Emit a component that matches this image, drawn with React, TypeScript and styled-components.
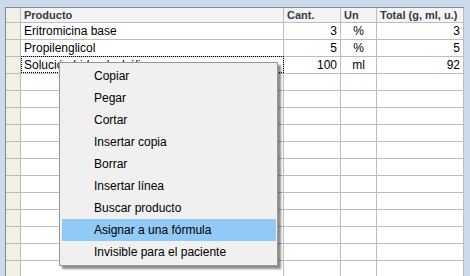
import styled, { createGlobalStyle } from 'styled-components';

interface RowData {
  producto: string;
  cant: string;
  un: string;
  total: string;
  focused?: boolean;
}

const rows: RowData[] = [
  { producto: 'Eritromicina base', cant: '3', un: '%', total: '3' },
  { producto: 'Propilenglicol', cant: '5', un: '%', total: '5' },
  { producto: 'Solución hidroalcohólica', cant: '100', un: 'ml', total: '92', focused: true },
];

const EMPTY_ROWS = 12;

const menuItems = [
  'Copiar',
  'Pegar',
  'Cortar',
  'Insertar copia',
  'Borrar',
  'Insertar línea',
  'Buscar producto',
  'Asignar a una fórmula',
  'Invisible para el paciente',
];

const HOVER_ITEM = 'Asignar a una fórmula';

export default function App() {
  const empty: RowData[] = Array.from({ length: EMPTY_ROWS }, () => ({
    producto: '',
    cant: '',
    un: '',
    total: '',
  }));

  return (
    <>
      <GlobalStyle />
      <Window>
        <GridBox>
          <HeaderRow>
            <RowHead />
            <HeadCell>Producto</HeadCell>
            <HeadCell>Cant.</HeadCell>
            <HeadCell>Un</HeadCell>
            <HeadCell>Total (g, ml, u.)</HeadCell>
          </HeaderRow>
          {[...rows, ...empty].map((r, i) => (
            <DataRow key={i}>
              <RowHead />
              <Cell $focused={r.focused}>{r.producto}</Cell>
              <Cell $align="right">{r.cant}</Cell>
              <Cell $align="center">{r.un}</Cell>
              <Cell $align="right">{r.total}</Cell>
            </DataRow>
          ))}
        </GridBox>
        <ContextMenu>
          {menuItems.map(item => (
            <MenuItem key={item} $active={item === HOVER_ITEM}>
              {item}
            </MenuItem>
          ))}
        </ContextMenu>
      </Window>
    </>
  );
}

const GlobalStyle = createGlobalStyle`
  html, body {
    margin: 0;
    padding: 0;
    width: 470px;
    height: 276px;
    overflow: hidden;
    background: #cbdbeb;
  }
  body {
    font-family: "Liberation Sans", Arial, sans-serif;
  }
`;

const Window = styled.div`
  position: relative;
  width: 470px;
  height: 276px;
  padding: 7px 0 0 5px;
  box-sizing: border-box;
  overflow: hidden;
`;

const GridBox = styled.div`
  width: 459px;
  border-top: 1px solid #8a8a8a;
  border-left: 1px solid #8a8a8a;
  background: #ffffff;
  box-sizing: border-box;
`;

const columns = '15px 263px 57px 36px 87px';

const HeaderRow = styled.div`
  display: grid;
  grid-template-columns: ${columns};
  height: 15px;
`;

const DataRow = styled.div`
  display: grid;
  grid-template-columns: ${columns};
  height: 17px;
`;

const RowHead = styled.div`
  background: #f0f0e7;
  border-right: 1px solid #bdbdbd;
  border-bottom: 1px solid #bdbdbd;
  box-sizing: border-box;
`;

const HeadCell = styled.div`
  background: #f4f4f4;
  border-right: 1px solid #bdbdbd;
  border-bottom: 1px solid #bdbdbd;
  box-sizing: border-box;
  padding-left: 3px;
  font-size: 11px;
  font-weight: bold;
  line-height: 14px;
  color: #3a3a44;
  white-space: nowrap;
  overflow: hidden;
`;

const Cell = styled.div<{ $align?: 'left' | 'right' | 'center'; $focused?: boolean }>`
  position: relative;
  border-right: 1px solid #bdbdbd;
  border-bottom: 1px solid #bdbdbd;
  box-sizing: border-box;
  padding: 0 3px;
  font-size: 12px;
  line-height: 16px;
  color: #000000;
  text-align: ${p => p.$align ?? 'left'};
  white-space: nowrap;
  overflow: visible;

  ${p =>
    p.$focused &&
    `
    &::after {
      content: '';
      position: absolute;
      left: 0;
      top: -1px;
      right: -1px;
      bottom: 0;
      border: 1px dotted #000;
    }
  `}
`;

const ContextMenu = styled.div`
  position: absolute;
  left: 59px;
  top: 62px;
  width: 219px;
  padding: 2px 0;
  box-sizing: border-box;
  background: #f0f0f0;
  border: 1px solid #979797;
  box-shadow: 3px 3px 2px rgba(0, 0, 0, 0.45);
`;

const MenuItem = styled.div<{ $active: boolean }>`
  height: 22px;
  line-height: 22px;
  margin: 0 1px 0 2px;
  padding-left: 32px;
  font-size: 12px;
  color: #000000;
  white-space: nowrap;
  background: ${p => (p.$active ? '#91c9f7' : 'transparent')};
`;
